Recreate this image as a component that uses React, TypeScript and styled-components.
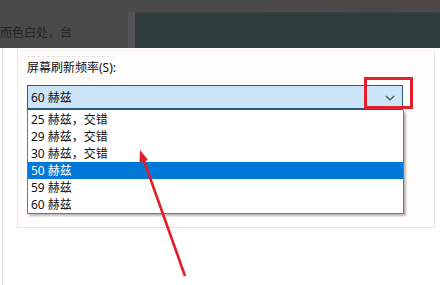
import styled, { createGlobalStyle } from "styled-components";

const GlobalStyle = createGlobalStyle`
  html, body {
    margin: 0;
    padding: 0;
    background: #ffffff;
  }
  body {
    font-family: "Noto Sans", "Noto Sans CJK SC", sans-serif;
  }
`;

const rates = [
  { label: "25 赫兹，交错" },
  { label: "29 赫兹，交错" },
  { label: "30 赫兹，交错" },
  { label: "50 赫兹", selected: true },
  { label: "59 赫兹" },
  { label: "60 赫兹" },
];

export default function App() {
  return (
    <>
      <GlobalStyle />
      <Page>
        <TopBar>
          <TopText>而色白处，台</TopText>
          <Divider />
          <DarkPanel />
        </TopBar>
        <Body>
          <LeftRail />
          <GroupBox>
            <CutLine />
            <Label>屏幕刷新频率(S):</Label>
            <ComboWrap>
              <Combo>
                <span>60 赫兹</span>
                <Chevron width="10" height="6" viewBox="0 0 10 6">
                  <path d="M1 1 L5 5 L9 1" fill="none" stroke="#4a4a4a" strokeWidth="1.2" />
                </Chevron>
              </Combo>
              <RedBox />
              <DropList>
                {rates.map((r) => (
                  <Item key={r.label} $selected={!!r.selected}>
                    {r.label}
                  </Item>
                ))}
              </DropList>
            </ComboWrap>
          </GroupBox>
        </Body>
        <Arrow width="440" height="285" viewBox="0 0 440 285">
          <line x1="185" y1="276" x2="143" y2="158" stroke="#e11d2a" strokeWidth="2.6" />
          <polygon points="140,150 148,160 139.5,163" fill="#e11d2a" />
        </Arrow>
      </Page>
    </>
  );
}

const Page = styled.div`
  position: relative;
  width: 440px;
  height: 285px;
  overflow: hidden;
  background: #ffffff;
`;

const TopBar = styled.div`
  display: flex;
  height: 48px;
  background: linear-gradient(90deg, #4a4a4a 0%, #4b4a4a 60%, #4f4848 100%);
`;

const TopText = styled.div`
  width: 128px;
  padding-top: 26px;
  font-size: 12px;
  line-height: 14px;
  color: #232323;
  white-space: nowrap;
  overflow: hidden;
`;

const Divider = styled.div`
  width: 7px;
  margin-top: 12px;
  background: #545254;
`;

const DarkPanel = styled.div`
  flex: 1;
  margin-top: 12px;
  background: #2f3c3c;
  border-top: 1px solid #3a3f3f;
`;

const Body = styled.div`
  display: flex;
  height: 237px;
`;

const LeftRail = styled.div`
  width: 1px;
  margin-left: 2px;
  margin-right: 14px;
  background: #dcdcdc;
`;

const GroupBox = styled.div`
  width: 418px;
  height: 178px;
  margin-top: 2px;
  padding: 0 9px;
  border: 1px solid #e6e6e6;
  border-top-color: #f0f0f0;
  background: #fffefc;
  box-sizing: border-box;
`;

const CutLine = styled.div`
  width: 86px;
  height: 1px;
  margin: 5px 0 0 0;
  background: repeating-linear-gradient(90deg, #e2e2e2 0 3px, #f7f7f7 3px 5px);
`;

const Label = styled.div`
  margin-top: 3px;
  font-size: 12px;
  line-height: 16px;
  color: #111111;
`;

const ComboWrap = styled.div`
  position: relative;
  width: 376px;
  margin-top: 9px;
`;

const Combo = styled.div`
  display: flex;
  align-items: center;
  justify-content: space-between;
  height: 25px;
  padding: 0 7px 0 3px;
  border: 1px solid #2a5b84;
  border-bottom-width: 2px;
  background: #cce4f7;
  box-sizing: border-box;
  font-size: 12px;
  color: #111111;
`;

const Chevron = styled.svg`
  display: block;
  margin-top: 1px;
`;

const RedBox = styled.div`
  position: absolute;
  left: 337px;
  top: -8px;
  width: 49px;
  height: 32px;
  border: 3px solid #e4202e;
  box-sizing: border-box;
`;

const DropList = styled.div`
  position: absolute;
  left: 0;
  top: 25px;
  width: 377px;
  padding: 1px 0 0;
  border: 1px solid #627a90;
  border-top: none;
  background: #ffffff;
  box-shadow: 2px 2px 2px rgba(0, 0, 0, 0.28);
  box-sizing: border-box;
`;

const Item = styled.div<{ $selected: boolean }>`
  height: 17px;
  padding-left: 3px;
  font-size: 12px;
  line-height: 17px;
  color: ${(p) => (p.$selected ? "#ffffff" : "#111111")};
  background: ${(p) => (p.$selected ? "#0078d7" : "transparent")};
`;

const Arrow = styled.svg`
  position: absolute;
  left: 0;
  top: 0;
  pointer-events: none;
`;
